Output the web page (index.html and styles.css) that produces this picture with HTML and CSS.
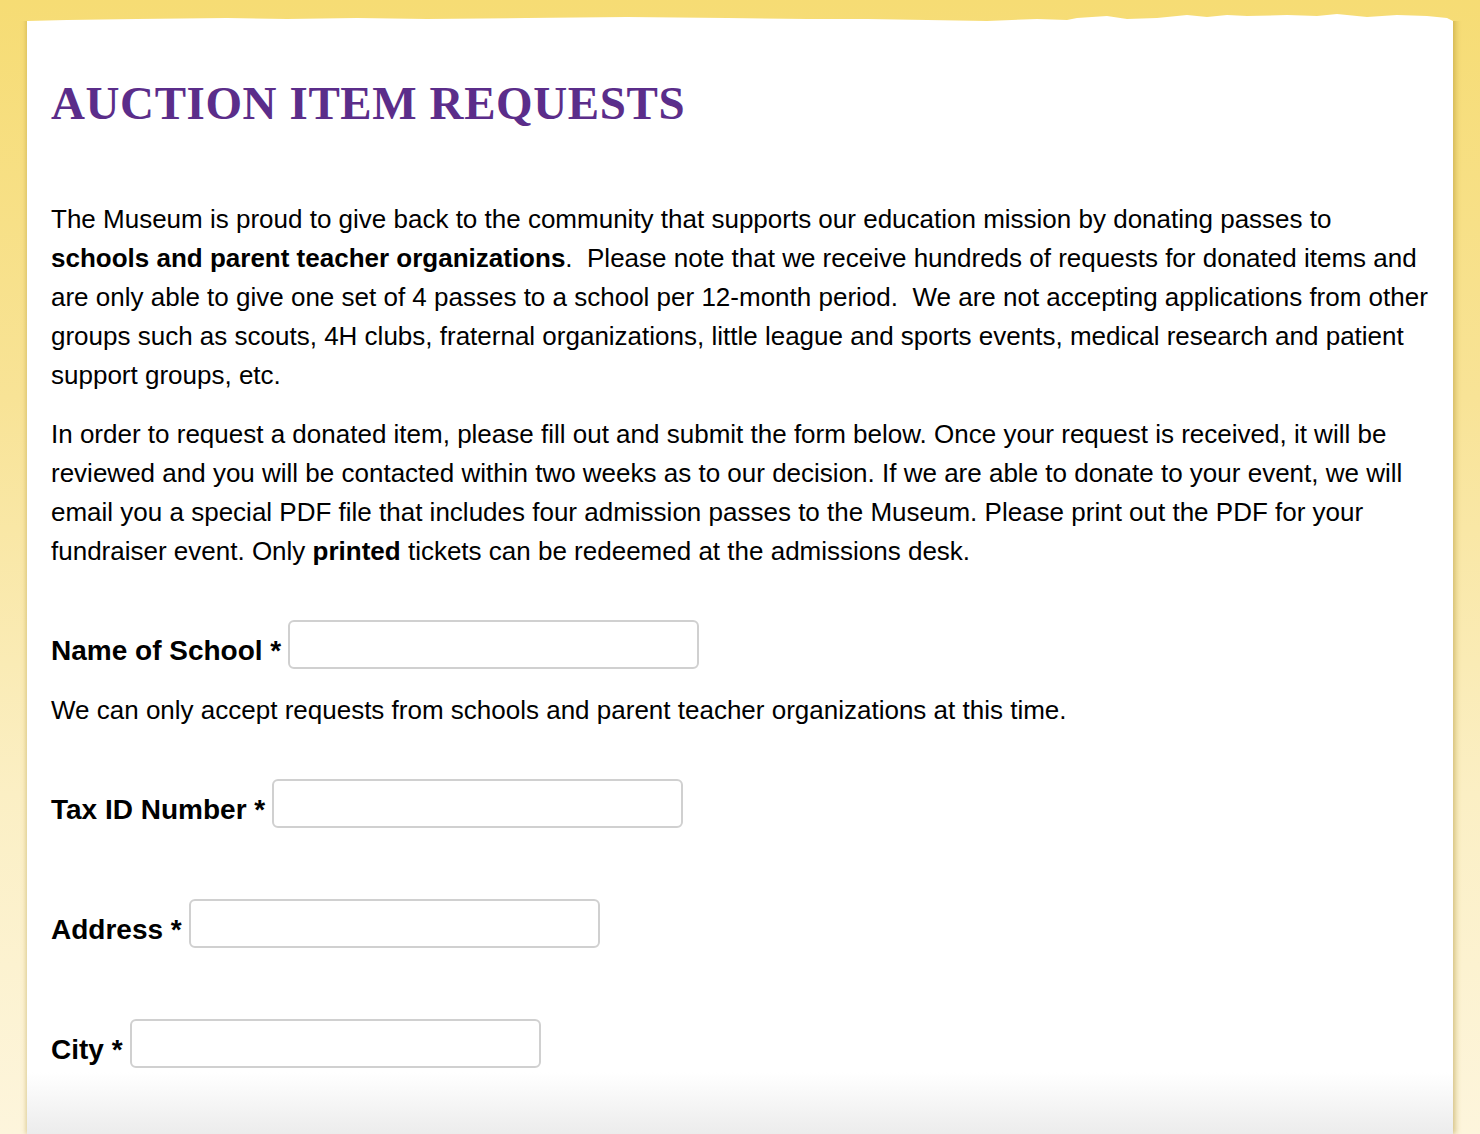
FILE: index.html
```html
<!DOCTYPE html>
<html lang="en">
<head>
<meta charset="utf-8">
<title>Auction Item Requests</title>
<link rel="stylesheet" href="styles.css">
</head>
<body>
<div class="page">
  <main class="panel">
    <h1 class="title">AUCTION ITEM REQUESTS</h1>
    <p class="copy">The Museum is proud to give back to the community that supports our education mission by donating passes to <strong>schools and parent teacher organizations</strong>.&nbsp; Please note that we receive hundreds of requests for donated items and are only able to give one set of 4 passes to a school per 12-month period.&nbsp; We are not accepting applications from other groups such as scouts, 4H clubs, fraternal organizations, little league and sports events, medical research and patient support groups, etc.</p>
    <p class="copy">In order to request a donated item, please fill out and submit the form below. Once your request is received, it will be reviewed and you will be contacted within two weeks as to our decision. If we are able to donate to your event, we will email you a special PDF file that includes four admission passes to the Museum. Please print out the PDF for your fundraiser event. Only <strong>printed</strong> tickets can be redeemed at the admissions desk.</p>
    <form class="form">
      <div class="field field-first">
        <label class="label" for="school">Name of School *</label>
        <input class="input" id="school" type="text">
      </div>
      <p class="help">We can only accept requests from schools and parent teacher organizations at this time.</p>
      <div class="field">
        <label class="label" for="tax">Tax ID Number *</label>
        <input class="input" id="tax" type="text">
      </div>
      <div class="field">
        <label class="label" for="addr">Address *</label>
        <input class="input" id="addr" type="text">
      </div>
      <div class="field">
        <label class="label" for="city">City *</label>
        <input class="input" id="city" type="text">
      </div>
    </form>
  </main>
</div>
</body>
</html>
```

FILE: styles.css
```css
html, body {
  margin: 0;
  padding: 0;
  height: 100%;
}
body {
  background: linear-gradient(to bottom, #f6dc74 0%, #f8e396 35%, #fbefc4 70%, #fdf5dc 100%);
  font-family: "Liberation Sans", Arial, sans-serif;
  color: #000;
  overflow: hidden;
}
.page {
  padding: 13px 27px 0 27px;
  height: 100%;
  box-sizing: border-box;
}
.panel {
  background: linear-gradient(to bottom, #ffffff 0%, #ffffff 94.5%, #ececec 100%);
  height: 100%;
  box-sizing: border-box;
  padding: 60px 19px 0 24px;
  box-shadow: 3px 0 5px rgba(170, 140, 40, 0.4), -2px 0 4px rgba(170, 140, 40, 0.25);
  clip-path: polygon(
    -10px 8px, 0 8px, 40px 7px, 110px 6px, 200px 5px, 260px 6px, 330px 5px, 400px 6px,
    500px 5px, 600px 4px, 700px 5px, 780px 6px, 840px 6px, 900px 7px, 960px 8px,
    1010px 6px, 1040px 7px, 1050px 5px, 1080px 3px, 1100px 6px, 1130px 5px, 1160px 2px,
    1180px 4px, 1200px 2px, 1220px 3px, 1260px 2px, 1290px 3px, 1310px 1px, 1340px 4px,
    1370px 2px, 1400px 3px, 1420px 5px, 1426px 8px, 1440px 8px,
    1440px 100%, -10px 100%);
}
.title {
  margin: 0 0 67px 0;
  font-family: "Liberation Serif", "Times New Roman", serif;
  font-weight: bold;
  font-size: 47px;
  line-height: 60px;
  color: #5b2d8a;
  letter-spacing: 0.6px;
}
.copy {
  margin: 0 0 20px 0;
  font-size: 26px;
  line-height: 39px;
}
.copy strong {
  font-weight: bold;
}
.form {
  margin-top: 49px;
}
.field {
  display: flex;
  align-items: flex-end;
  gap: 7px;
  margin-bottom: 71px;
}
.field-first {
  margin-bottom: 26px;
}
.label {
  font-weight: bold;
  font-size: 28px;
  line-height: 32px;
  padding-bottom: 2px;
}
.input {
  width: 411px;
  height: 49px;
  box-sizing: border-box;
  border: 2px solid #d0d0d0;
  border-radius: 6px;
  background: #fff;
  margin: 0;
}
.help {
  margin: 0 0 54px 0;
  font-size: 26px;
  line-height: 30px;
}
```
